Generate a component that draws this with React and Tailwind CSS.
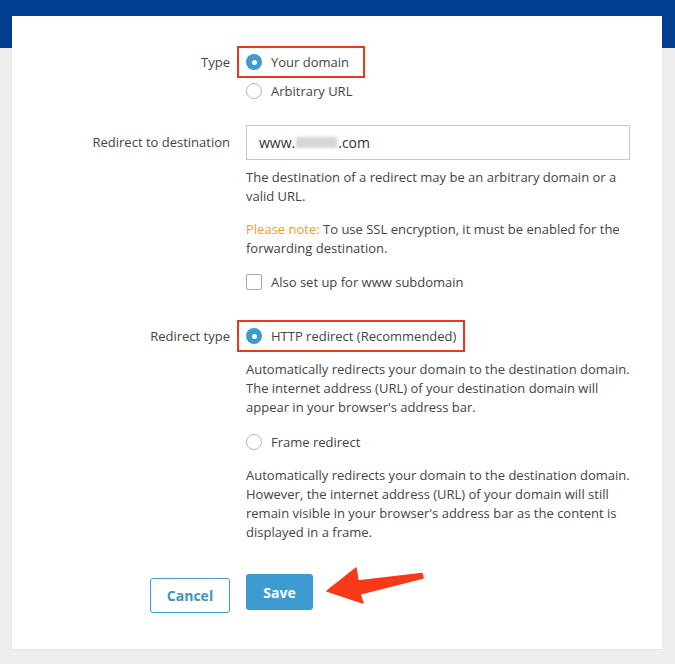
import React from "react";

const Radio = ({ checked }) =>
  checked ? (
    <span className="flex h-[16px] w-[16px] shrink-0 items-center justify-center rounded-full bg-[#3e9bd0]">
      <span className="h-[5px] w-[5px] rounded-full bg-white" />
    </span>
  ) : (
    <span className="h-[16px] w-[16px] shrink-0 rounded-full border border-[#b9b9b9] bg-white" />
  );

const Row = ({ label, children, labelClass = "" }) => (
  <div className="grid grid-cols-[218px_384px] gap-x-[16px]">
    <div className={`text-right ${labelClass}`}>{label}</div>
    <div>{children}</div>
  </div>
);

export default function App() {
  return (
    <div
      className="relative min-h-[664px] w-[675px] bg-[#eeeeee] text-[13px] leading-[19px] text-[#444]"
      style={{ fontFamily: '"Open Sans", "Noto Sans", sans-serif' }}
    >
      <div className="h-[48px] bg-[#023e8f]" />
      <div className="mx-[12px] -mt-[32px] w-[650px] bg-white pb-[36px] pt-[30px] shadow-[0_0_1px_rgba(0,0,0,0.15)]">
        {/* Type */}
        <Row label="Type" labelClass="flex h-[32px] items-center justify-end">
          <div className="-ml-[9px] flex h-[32px] w-[128px] items-center gap-[9px] border-2 border-[#e8391f] pl-[7px]">
            <Radio checked />
            <span>Your domain</span>
          </div>
          <div className="mt-[1px] flex h-[24px] items-center gap-[9px]">
            <Radio />
            <span>Arbitrary URL</span>
          </div>
        </Row>

        {/* Destination */}
        <div className="mt-[22px]">
          <Row label="Redirect to destination" labelClass="flex h-[35px] items-center justify-end">
            <div className="flex h-[35px] w-[384px] items-center border border-[#c8c8c8] px-[12px] text-[14px] text-[#333]">
              <span>www.</span>
              <span className="mx-[1px] inline-block h-[11px] w-[41px] bg-[#d6d6d6] blur-[1.5px]" />
              <span>.com</span>
            </div>
            <p className="mt-[8px]">
              The destination of a redirect may be an arbitrary domain or a valid URL.
            </p>
            <p className="mt-[14px]">
              <span className="text-[#f29c2b]">Please note:</span> To use SSL encryption, it must be enabled for the forwarding destination.
            </p>
            <div className="mt-[12px] flex h-[24px] items-center gap-[9px]">
              <span className="h-[16px] w-[16px] rounded-[2px] border border-[#a9a9a9] bg-white" />
              <span>Also set up for www subdomain</span>
            </div>
          </Row>
        </div>

        {/* Redirect type */}
        <div className="mt-[26px]">
          <Row label="Redirect type" labelClass="flex h-[32px] items-center justify-end">
            <div className="-ml-[9px] flex h-[32px] w-[228px] items-center gap-[9px] border-2 border-[#e8391f] pl-[7px]">
              <Radio checked />
              <span>HTTP redirect (Recommended)</span>
            </div>
            <p className="mt-[8px]">
              Automatically redirects your domain to the destination domain. The internet address (URL) of your destination domain will appear in your browser's address bar.
            </p>
            <div className="mt-[13px] flex h-[24px] items-center gap-[9px]">
              <Radio />
              <span>Frame redirect</span>
            </div>
            <p className="mt-[12px]">
              Automatically redirects your domain to the destination domain. However, the internet address (URL) of your domain will still remain visible in your browser's address bar as the content is displayed in a frame.
            </p>
          </Row>
        </div>

        {/* Buttons */}
        <div className="mt-[32px] grid grid-cols-[218px_384px] items-start gap-x-[16px]">
          <div className="flex justify-end pt-[4px]">
            <button className="h-[35px] w-[80px] rounded-[3px] border border-[#3f9bcc] bg-white text-[14px] font-bold text-[#3a94c6]">
              Cancel
            </button>
          </div>
          <div>
            <button className="h-[36px] w-[67px] rounded-[3px] bg-[#3e9bcf] text-[14px] font-bold text-white">
              Save
            </button>
          </div>
        </div>
      </div>

      {/* annotation arrow */}
      <svg className="pointer-events-none absolute left-0 top-0" width="675" height="664" viewBox="0 0 675 664">
        <path
          d="M327 591 L356 568 L358 581 L422 573.5 L423 578 L360 594 L363 603 Z"
          fill="#f93a1a"
          stroke="#f93a1a"
          strokeWidth="1.5"
          strokeLinejoin="round"
        />
      </svg>
    </div>
  );
}
